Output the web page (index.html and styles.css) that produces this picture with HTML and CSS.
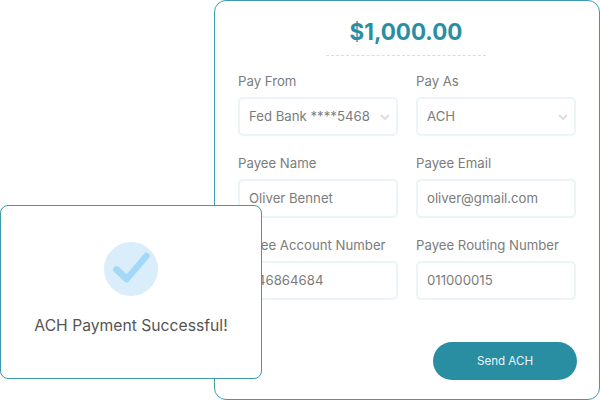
FILE: index.html
```html
<!DOCTYPE html>
<html lang="en">
<head>
    <meta charset="UTF-8">
    <title>Send ACH</title>
    <link rel="stylesheet" href="styles.css">
</head>
<body>
    <div class="stage">
        <div class="payment-card">
            <div class="amount">$1,000.00</div>
            <div class="form-grid">
                <div class="field">
                    <div class="field-label">Pay From</div>
                    <div class="field-box">
                        <span>Fed Bank ****5468</span>
                        <svg class="chevron" width="10" height="6" viewBox="0 0 10 6"><path d="M1 1l4 4 4-4" fill="none" stroke="#dcdfe0" stroke-width="2"/></svg>
                    </div>
                </div>
                <div class="field">
                    <div class="field-label">Pay As</div>
                    <div class="field-box">
                        <span>ACH</span>
                        <svg class="chevron" width="10" height="6" viewBox="0 0 10 6"><path d="M1 1l4 4 4-4" fill="none" stroke="#dcdfe0" stroke-width="2"/></svg>
                    </div>
                </div>
                <div class="field">
                    <div class="field-label">Payee Name</div>
                    <div class="field-box">Oliver Bennet</div>
                </div>
                <div class="field">
                    <div class="field-label">Payee Email</div>
                    <div class="field-box">oliver@gmail.com</div>
                </div>
                <div class="field">
                    <div class="field-label">Payee Account Number</div>
                    <div class="field-box">546864684</div>
                </div>
                <div class="field">
                    <div class="field-label">Payee Routing Number</div>
                    <div class="field-box">011000015</div>
                </div>
            </div>
            <div class="actions">
                <button class="send-btn">Send ACH</button>
            </div>
        </div>
        <div class="toast">
            <div class="check-circle">
                <svg width="40" height="40" viewBox="0 0 40 40"><path d="M5.500 20.500L15.700 30L35.500 7" fill="none" stroke="#a3d8f8" stroke-width="6.500" stroke-linecap="round" stroke-linejoin="round"/></svg>
            </div>
            <div class="toast-text">ACH Payment Successful!</div>
        </div>
    </div>
</body>
</html>
```

FILE: styles.css
```css
html, body {
    margin: 0;
    padding: 0;
    background: #fff;
}

body {
    font-family: Inter, "Noto Sans", sans-serif;
    overflow: hidden;
}

.stage {
    position: relative;
    width: 600px;
    height: 400px;
}

.payment-card {
    box-sizing: border-box;
    width: 386px;
    height: 400px;
    margin-left: 214px;
    padding: 0 23px;
    border: 1px solid #3f9aae;
    border-radius: 12px;
    background: #fff;
}

.amount {
    width: 160px;
    margin: 0 auto;
    padding: 16px 0 8px;
    border-bottom: 1px dashed #d9dddd;
    font-size: 22.400px;
    line-height: 30px;
    font-weight: 700;
    color: #2a8ea3;
    text-align: center;
    white-space: nowrap;
    position: relative;
    left: -1px;
}

.form-grid {
    display: grid;
    grid-template-columns: 160px 160px;
    column-gap: 18px;
    row-gap: 18px;
    margin-top: 16px;
}

.field-label {
    font-size: 13.200px;
    line-height: 18px;
    color: #7c7c7c;
    margin-bottom: 7px;
}

.field-box {
    box-sizing: border-box;
    display: flex;
    align-items: center;
    justify-content: space-between;
    height: 39px;
    padding: 0 6px 2px 9px;
    border: 2px solid #ebf4f6;
    border-radius: 5px;
    font-size: 13.200px;
    color: #7c7c7c;
    white-space: nowrap;
}

.chevron {
    margin-top: 2px;
}

.actions {
    display: flex;
    justify-content: flex-end;
    margin-top: 42px;
    margin-right: -1px;
}

.send-btn {
    width: 144px;
    height: 38px;
    border: none;
    border-radius: 19px;
    background: #2a8ea3;
    color: #e8f4f6;
    font-family: inherit;
    font-size: 11.600px;
}

.toast {
    position: absolute;
    left: 0;
    top: 205px;
    box-sizing: border-box;
    width: 262px;
    height: 174px;
    padding-top: 36px;
    border: 1px solid #3f9aae;
    border-radius: 8px;
    background: #fff;
    text-align: center;
}

.check-circle {
    display: flex;
    align-items: center;
    justify-content: center;
    width: 54px;
    height: 54px;
    margin: 0 auto;
    border-radius: 50%;
    background: #daedfb;
}

.toast-text {
    margin-top: 19px;
    font-size: 15.700px;
    line-height: 22px;
    color: #555;
}
```
